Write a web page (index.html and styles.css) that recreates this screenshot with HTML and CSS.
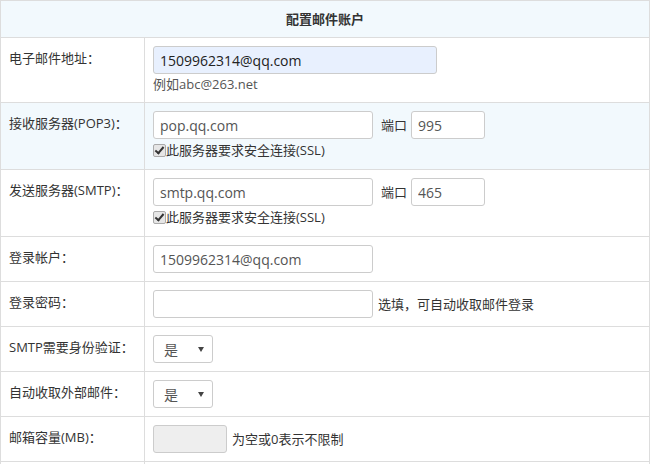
FILE: index.html
```html
<!DOCTYPE html>
<html lang="zh-CN">
<head>
    <meta charset="UTF-8">
    <meta name="viewport" content="width=device-width, initial-scale=1.0">
    <title>配置邮件账户</title>
    <link rel="stylesheet" href="styles.css">
</head>
<body>

<table class="form-table">
    <thead>
        <tr>
            <th colspan="2">配置邮件账户</th>
        </tr>
    </thead>
    <tbody>
        <!-- 邮件地址 -->
        <tr>
            <td class="label">电子邮件地址：</td>
            <td class="field">
                <input type="text" class="text w-lg autofill" value="1509962314@qq.com">
                <div class="tip">例如abc@263.net</div>
            </td>
        </tr>

        <!-- 接收服务器 -->
        <tr class="hover">
            <td class="label">接收服务器(POP3)：</td>
            <td class="field">
                <div class="line">
                    <input type="text" class="text w-md" value="pop.qq.com">
                    <span class="port-label">端口</span>
                    <input type="text" class="text w-sm" value="995">
                </div>
                <label class="check"><input type="checkbox" checked>此服务器要求安全连接(SSL)</label>
            </td>
        </tr>

        <!-- 发送服务器 -->
        <tr>
            <td class="label">发送服务器(SMTP)：</td>
            <td class="field">
                <div class="line">
                    <input type="text" class="text w-md" value="smtp.qq.com">
                    <span class="port-label">端口</span>
                    <input type="text" class="text w-sm" value="465">
                </div>
                <label class="check"><input type="checkbox" checked>此服务器要求安全连接(SSL)</label>
            </td>
        </tr>

        <tr>
            <td class="label">登录帐户：</td>
            <td class="field">
                <input type="text" class="text w-md" value="1509962314@qq.com">
            </td>
        </tr>

        <tr>
            <td class="label">登录密码：</td>
            <td class="field">
                <div class="line">
                    <input type="password" class="text w-md">
                    <span class="hint">选填，可自动收取邮件登录</span>
                </div>
            </td>
        </tr>

        <tr>
            <td class="label">SMTP需要身份验证：</td>
            <td class="field">
                <span class="select-wrap">
                    <select class="select">
                        <option>是</option>
                        <option>否</option>
                    </select>
                </span>
            </td>
        </tr>

        <tr>
            <td class="label">自动收取外部邮件：</td>
            <td class="field">
                <span class="select-wrap">
                    <select class="select">
                        <option>是</option>
                        <option>否</option>
                    </select>
                </span>
            </td>
        </tr>

        <tr>
            <td class="label">邮箱容量(MB)：</td>
            <td class="field">
                <div class="line">
                    <input type="text" class="text w-sm" disabled>
                    <span class="hint">为空或0表示不限制</span>
                </div>
            </td>
        </tr>

        <tr>
            <td class="label"></td>
            <td class="field"></td>
        </tr>
    </tbody>
</table>

</body>
</html>
```

FILE: styles.css
```css
body {
    margin: 0;
    font-family: "Open Sans", "Noto Sans CJK SC", sans-serif;
    font-size: 13px;
    color: #333;
    background-color: #fff;
}
.form-table {
    width: 650px;
    border-collapse: collapse;
    border: 1px solid #ddd;
}
.form-table th,
.form-table td {
    border: 1px solid #ddd;
    line-height: 20px;
    vertical-align: top;
}
.form-table th {
    padding: 8px;
    background-color: #f2f9fd;
    font-weight: bold;
    text-align: center;
}
.form-table .label {
    width: 127px;
    height: 20px;
    padding: 10px 8px 8px 8px;
    white-space: nowrap;
}
.form-table .field {
    padding: 8px;
}
.form-table tr.hover td {
    background-color: #f2f9fd;
}
.line {
    display: flex;
    align-items: center;
}
.text {
    box-sizing: border-box;
    height: 28px;
    padding: 0 6px;
    border: 1px solid #ccc;
    border-radius: 3px;
    font-family: "Open Sans", "Noto Sans CJK SC", sans-serif;
    font-size: 14px;
    color: #555;
    background-color: #fff;
    outline: none;
}
.text.autofill {
    background-color: #e8f0fe;
    color: #222;
}
.text:disabled {
    background-color: #eee;
}
.w-lg { width: 284px; }
.w-md { width: 220px; }
.w-sm { width: 74px; }
.port-label {
    margin: 0 4px 0 8px;
}
.hint {
    margin-left: 5px;
}
.tip {
    color: #555;
}
.check {
    display: flex;
    align-items: center;
    height: 22px;
}
.check input {
    appearance: none;
    position: relative;
    box-sizing: border-box;
    width: 13px;
    height: 13px;
    margin: 0;
    border: 1px solid #aaa;
    border-radius: 2px;
    background-color: #e6e6e6;
}
.check input:checked::after {
    content: "";
    position: absolute;
    left: 3px;
    top: 0px;
    width: 3px;
    height: 7px;
    border: solid #333;
    border-width: 0 2px 2px 0;
    transform: rotate(40deg);
}
.select-wrap {
    position: relative;
    display: inline-block;
}
.select-wrap::after {
    content: "";
    position: absolute;
    right: 9px;
    top: 12px;
    border-left: 3px solid transparent;
    border-right: 3px solid transparent;
    border-top: 5px solid #444;
    pointer-events: none;
}
.select {
    appearance: none;
    box-sizing: border-box;
    width: 60px;
    height: 28px;
    padding: 0 10px;
    border: 1px solid #ccc;
    border-radius: 3px;
    font-family: "Open Sans", "Noto Sans CJK SC", sans-serif;
    font-size: 14px;
    color: #555;
    background-color: #fff;
}
```
